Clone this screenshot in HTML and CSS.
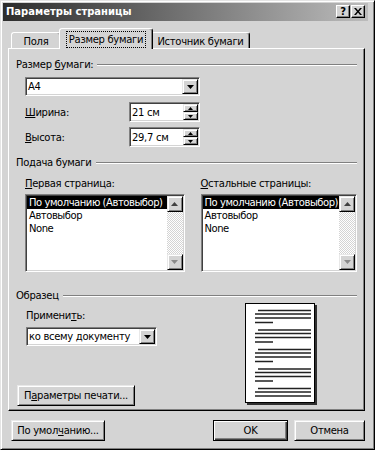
FILE: index.html
```html
<!DOCTYPE html>
<html lang="ru">
<head>
<meta charset="utf-8">
<title>Параметры страницы</title>
<link rel="stylesheet" href="styles.css">
</head>
<body>
<div class="window">
  <div class="titlebar">
    <span class="title">Параметры страницы</span>
    <div class="tb-buttons">
      <span class="tb-btn help">?</span>
      <span class="tb-btn close"><svg width="8" height="7" viewBox="0 0 8 7"><path d="M0 0h2l2 2.5L6 0h2L5 3.5 8 7H6L4 4.5 2 7H0l3-3.5z"/></svg></span>
    </div>
  </div>
  <div class="content">
    <div class="tabs">
      <div class="tab t1">Поля</div>
      <div class="tab t2 active"><span class="focus">Размер бумаги</span></div>
      <div class="tab t3">Источник бумаги</div>
    </div>
    <div class="panel">
      <div class="group-head"><span>Размер <u>б</u>умаги:</span></div>
      <div class="field combo combo-size">
        <span class="field-text">A4</span>
        <span class="raised drop-btn"><svg width="7" height="4" viewBox="0 0 7 4"><path d="M0 0h7L3.5 4z"/></svg></span>
      </div>
      <div class="spin-row r1">
        <span class="spin-label"><u>Ш</u>ирина:</span>
        <div class="field spin">
          <span class="field-text">21 см</span>
          <span class="spin-btns">
            <span class="raised sb"><svg width="5" height="3" viewBox="0 0 5 3"><path d="M2.5 0L5 3H0z"/></svg></span>
            <span class="raised sb"><svg width="5" height="3" viewBox="0 0 5 3"><path d="M0 0h5L2.5 3z"/></svg></span>
          </span>
        </div>
      </div>
      <div class="spin-row r2">
        <span class="spin-label"><u>В</u>ысота:</span>
        <div class="field spin">
          <span class="field-text">29,7 см</span>
          <span class="spin-btns">
            <span class="raised sb"><svg width="5" height="3" viewBox="0 0 5 3"><path d="M2.5 0L5 3H0z"/></svg></span>
            <span class="raised sb"><svg width="5" height="3" viewBox="0 0 5 3"><path d="M0 0h5L2.5 3z"/></svg></span>
          </span>
        </div>
      </div>

      <div class="group-head g2"><span>Подача бумаги</span></div>
      <div class="cols">
        <div class="col col1">
          <div class="col-label"><u>П</u>ервая страница:</div>
          <div class="field listbox">
            <div class="list-items">
              <div class="item sel">По умолчанию (Автовыбор)</div>
              <div class="item">Автовыбор</div>
              <div class="item">None</div>
            </div>
            <div class="scrollbar">
              <span class="raised sbtn"><svg width="7" height="4" viewBox="0 0 7 4"><path d="M3.5 0L7 4H0z" fill="#404040"/></svg></span>
              <span class="track"></span>
              <span class="raised sbtn"><svg width="7" height="4" viewBox="0 0 7 4"><path d="M0 0h7L3.5 4z" fill="#8a8a8a"/></svg></span>
            </div>
          </div>
        </div>
        <div class="col col2">
          <div class="col-label"><u>О</u>стальные страницы:</div>
          <div class="field listbox">
            <div class="list-items">
              <div class="item sel">По умолчанию (Автовыбор)</div>
              <div class="item">Автовыбор</div>
              <div class="item">None</div>
            </div>
            <div class="scrollbar">
              <span class="raised sbtn"><svg width="7" height="4" viewBox="0 0 7 4"><path d="M3.5 0L7 4H0z" fill="#404040"/></svg></span>
              <span class="track"></span>
              <span class="raised sbtn"><svg width="7" height="4" viewBox="0 0 7 4"><path d="M0 0h7L3.5 4z" fill="#8a8a8a"/></svg></span>
            </div>
          </div>
        </div>
      </div>

      <div class="group-head g3"><span>Образец</span></div>
      <div class="sample">
        <div class="sample-left">
          <div class="apply-label">Примени<u>т</u>ь:</div>
          <div class="field combo combo-apply">
            <span class="field-text">ко всему документу</span>
            <span class="raised drop-btn"><svg width="7" height="4" viewBox="0 0 7 4"><path d="M0 0h7L3.5 4z"/></svg></span>
          </div>
          <div class="raised btn print-btn"><span>П<u>а</u>раметры печати...</span></div>
        </div>
        <svg class="preview" width="74" height="103" viewBox="0 0 74 103">
          <rect x="2" y="2" width="70" height="100" fill="#303030"/>
          <rect x="0.5" y="0.5" width="69" height="99" fill="#fff" stroke="#000"/>
          <g stroke="#222" stroke-width="1.4">
            <path d="M13 7.5H66M10 11H66M10 15H66M10 19.5H28"/>
            <path d="M13 27H66M10 30.5H66M10 34.5H66M10 39H28"/>
            <path d="M13 46.5H66M10 50H66M10 54H66M10 58.5H28"/>
            <path d="M13 66H66M10 69.5H66M10 73.5H66M10 78H28"/>
            <path d="M13 85.5H66M10 89H66M10 93H66"/>
          </g>
        </svg>
      </div>
    </div>
    <div class="footer">
      <div class="raised btn btn-defaults"><span>По умол<u>ч</u>анию...</span></div>
      <div class="raised btn btn-ok default"><span>OK</span></div>
      <div class="raised btn btn-cancel"><span>Отмена</span></div>
    </div>
  </div>
</div>
</body>
</html>
```
FILE: styles.css
```css
html, body {
  margin: 0;
  padding: 0;
}
body {
  width: 375px;
  height: 450px;
  overflow: hidden;
  background: #d4d4d4;
  font-family: "DejaVu Sans", "Liberation Sans", sans-serif;
  font-size: 10px;
  letter-spacing: -0.3px;
  color: #000;
}
u { text-decoration: underline; text-underline-offset: 1px; }

.window {
  box-sizing: border-box;
  width: 375px;
  height: 450px;
  background: #d4d4d4;
  border: 1px solid;
  border-color: #e4e4e4 #000 #000 #e4e4e4;
  box-shadow: inset 1px 1px #fff, inset -1px -1px #808080;
  padding: 2px 6px 0 2px;
}

.titlebar {
  height: 18px;
  display: flex;
  justify-content: space-between;
  background: linear-gradient(to right, #2c2c2c, #bcbcbc);
  padding: 0 3px 0 3px;
}
.title {
  color: #fff;
  font-weight: bold;
  line-height: 18px;
  letter-spacing: 0;
}
.tb-buttons {
  display: flex;
  gap: 1px;
  margin-top: 2px;
}
.tb-btn {
  box-sizing: border-box;
  width: 14px;
  height: 13px;
  background: #d4d4d4;
  border: 1px solid;
  border-color: #fff #000 #000 #fff;
  box-shadow: inset -1px -1px #808080;
  display: flex;
  align-items: center;
  justify-content: center;
  font-weight: bold;
  font-size: 10px;
  line-height: 1;
}

.content {
  padding: 7px 3px 0 5px;
}

.tabs {
  display: flex;
  align-items: flex-end;
  height: 20px;
  padding-left: 3px;
}
.tab {
  box-sizing: border-box;
  height: 16px;
  border: 1px solid;
  border-bottom: none;
  border-color: #fff #000 transparent #fff;
  box-shadow: inset -1px 0 #808080;
  border-radius: 3px 3px 0 0;
  text-align: center;
  line-height: 13px;
  padding-top: 2px;
  background: #d4d4d4;
  white-space: nowrap;
}
.t1 { width: 50px; }
.t2 { width: 94px; }
.t3 { width: 99px; }
.tab.active {
  height: 21px;
  margin: 0 -2px -1px -2px;
  padding-top: 3px;
  position: relative;
  z-index: 2;
}
.focus {
  display: inline-block;
  padding: 1px 2px;
  outline: 1px dotted #000;
  line-height: 13px;
}

.panel {
  box-sizing: border-box;
  height: 363px;
  border: 1px solid;
  border-color: #fff #000 #000 #fff;
  box-shadow: inset -1px -1px #808080;
  padding: 9px 7px 4px 7px;
  display: flex;
  flex-direction: column;
}

.group-head {
  display: flex;
  align-items: center;
  height: 14px;
  line-height: 14px;
  white-space: nowrap;
}
.group-head::after {
  content: "";
  flex: 1;
  height: 0;
  border-top: 1px solid #808080;
  border-bottom: 1px solid #fff;
  margin-left: 4px;
}
.g2 { margin-top: 9px; }
.g3 { margin-top: 17px; }

.field {
  box-sizing: border-box;
  background: #fff;
  border: 1px solid;
  border-color: #808080 #fff #fff #808080;
  box-shadow: inset 1px 1px #404040, inset -1px -1px #d4d4d4;
  padding: 1px;
  display: flex;
}
.field-text {
  flex: 1;
  padding-left: 1px;
  align-self: center;
  white-space: nowrap;
}
.raised {
  box-sizing: border-box;
  background: #d4d4d4;
  border: 1px solid;
  border-color: #e8e8e8 #000 #000 #e8e8e8;
  box-shadow: inset 1px 1px #fff, inset -1px -1px #808080;
  display: flex;
  align-items: center;
  justify-content: center;
}
.drop-btn {
  width: 16px;
}
.combo-size {
  margin: 5px 0 0 9px;
  width: 175px;
  height: 20px;
}
.spin-row {
  display: flex;
  align-items: center;
  margin-left: 9px;
}
.r1 { margin-top: 6px; }
.r2 { margin-top: 5px; }
.spin-label {
  width: 104px;
}
.spin {
  width: 71px;
  height: 20px;
}
.spin-btns {
  width: 15px;
  display: flex;
  flex-direction: column;
}
.sb {
  flex: 1;
}

.cols {
  display: flex;
  gap: 16px;
  margin: 7px 0 0 9px;
}
.col1 { width: 160px; }
.col2 { width: 157px; }
.col-label {
  height: 14px;
  line-height: 14px;
}
.listbox {
  margin-top: 3px;
  height: 78px;
}
.list-items {
  flex: 1;
  min-width: 0;
}
.item {
  height: 13px;
  line-height: 13px;
  padding-left: 2px;
  white-space: nowrap;
  overflow: hidden;
  letter-spacing: -0.45px;
}
.item.sel {
  background: #000;
  color: #fff;
}
.scrollbar {
  width: 16px;
  display: flex;
  flex-direction: column;
}
.sbtn {
  height: 16px;
}
.track {
  flex: 1;
  background: repeating-conic-gradient(#d4d4d4 0 25%, #fff 0 50%) 0 0 / 2px 2px;
}

.sample {
  flex: 1;
  display: flex;
}
.sample-left {
  width: 229px;
  display: flex;
  flex-direction: column;
}
.apply-label {
  margin: 6px 0 0 10px;
  height: 14px;
  line-height: 14px;
}
.combo-apply {
  margin: 4px 0 0 10px;
  width: 131px;
  height: 19px;
}
.btn {
  height: 21px;
  line-height: 13px;
  white-space: nowrap;
}
.print-btn {
  margin-top: auto;
  margin-left: 1px;
  width: 118px;
}
.preview {
  display: block;
}

.footer {
  display: flex;
  margin-top: 9px;
  padding-left: 3px;
}
.btn-defaults { width: 94px; }
.btn-ok { width: 75px; margin-left: auto; }
.btn-cancel { width: 71px; margin-left: 6px; }
.btn.default {
  border-color: #000;
  box-shadow: inset 1px 1px #fff, inset -1px -1px #404040, inset -2px -2px #808080;
}
```
